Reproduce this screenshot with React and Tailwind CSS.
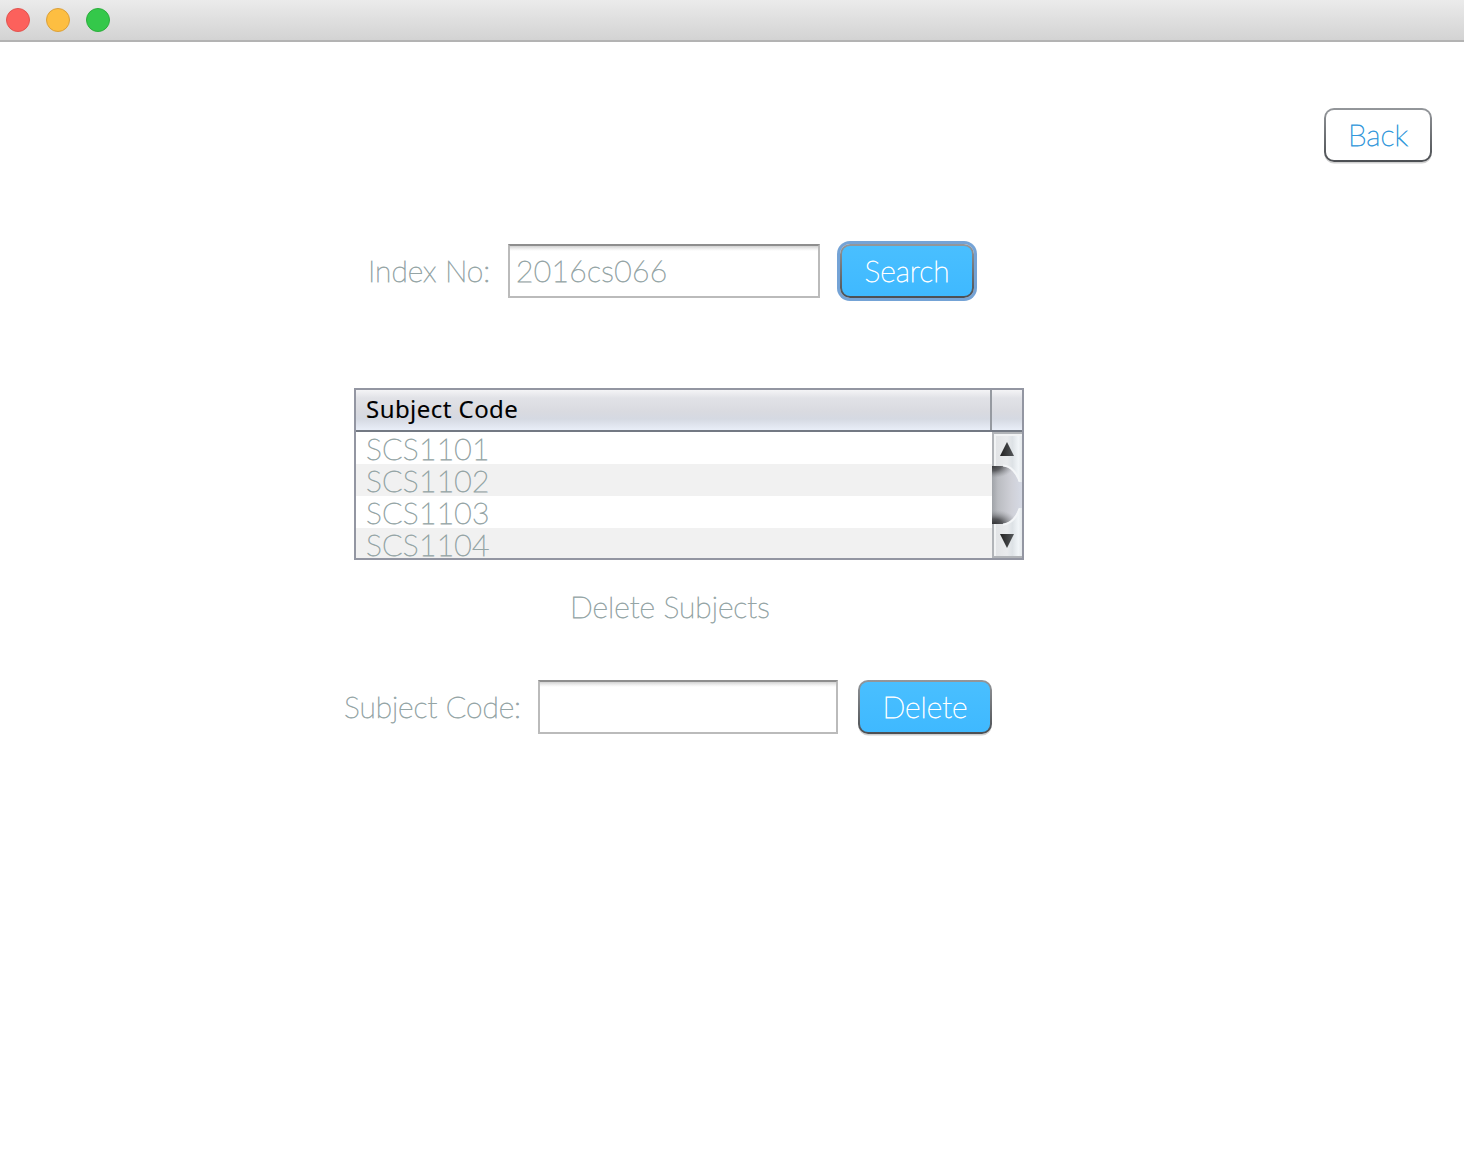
const codes = ['SCS1101', 'SCS1102', 'SCS1103', 'SCS1104'];

function TitleBar() {
  return (
    <header className="flex h-[42px] gap-4 border-b-2 border-[#b3b3b3] bg-linear-to-b from-[#ebebeb] to-[#d3d3d3] pl-[6px] pt-2">
      <span className="size-6 rounded-full border border-[#e2544f] bg-[#fc615c]" />
      <span className="size-6 rounded-full border border-[#dba03a] bg-[#fdbe41]" />
      <span className="size-6 rounded-full border border-[#2cae3c] bg-[#34c84a]" />
    </header>
  );
}

function Button({ children, className, fill, shadow = 'shadow-[0_2px_0_-0.5px_#d0d0d0]' }) {
  return (
    <button className={`flex h-[54px] shrink-0 rounded-[10px] bg-linear-to-b from-[#94979b] to-[#4c4f53] p-[2px] ${shadow} ${className}`}>
      <span className={`flex h-full w-full items-center justify-center rounded-[8px] pb-[2px] ${fill}`}>{children}</span>
    </button>
  );
}

const blue = 'bg-linear-to-b from-[#49bfff] to-[#3fb9ff] text-white';

function Field({ value, className }) {
  return (
    <div className={`flex h-[54px] shrink-0 items-center border-2 border-[#bbbbbb] border-t-[#8e8e8e] bg-linear-to-b from-[#d2d2d2] from-0% via-[#f1f1f1] via-[3px] to-white to-[5px] pb-[2px] pl-[6px] tracking-[0.35px] ${className}`}>
      {value}
    </div>
  );
}

function ScrollBar() {
  return (
    <svg className="h-[126px] w-[30px] shrink-0" viewBox="0 0 30 126">
      <defs>
        <linearGradient id="track">
          <stop offset="0" stopColor="#dfe2e5" />
          <stop offset=".22" stopColor="#e4e6e8" />
          <stop offset=".5" stopColor="#e9ebed" />
          <stop offset=".68" stopColor="#dde2e6" />
          <stop offset=".88" stopColor="#f1f5f8" />
          <stop offset="1" stopColor="#e5e9ec" />
        </linearGradient>
        <linearGradient id="thumb">
          <stop offset="0" stopColor="#a0a3a8" />
          <stop offset=".2" stopColor="#babcc1" />
          <stop offset=".65" stopColor="#cfd0d7" />
          <stop offset="1" stopColor="#d6dae5" />
        </linearGradient>
        <radialGradient id="shadeTop" gradientUnits="userSpaceOnUse" cx="0" cy="0" r="22" gradientTransform="translate(0 34) scale(1 .55)">
          <stop offset="0" stopColor="#38393b" />
          <stop offset=".4" stopColor="#4c4d50" stopOpacity=".85" />
          <stop offset="1" stopColor="#8c8e92" stopOpacity="0" />
        </radialGradient>
        <radialGradient id="shadeBottom" gradientUnits="userSpaceOnUse" cx="0" cy="0" r="24" gradientTransform="translate(2 92) scale(1 .6)">
          <stop offset="0" stopColor="#343537" />
          <stop offset=".35" stopColor="#4b4c4f" stopOpacity=".9" />
          <stop offset="1" stopColor="#9b9da1" stopOpacity="0" />
        </radialGradient>
        <linearGradient id="arrow">
          <stop offset="0" stopColor="#222" />
          <stop offset="1" stopColor="#55585b" />
        </linearGradient>
      </defs>
      <rect width="30" height="126" fill="url(#track)" />
      <path d="M0 1H30M1 0V126M0 125H30" fill="none" stroke="#b1b4b8" strokeWidth="2" />
      <path d="M2 3H30M3 2V124" fill="none" stroke="#f1f3f4" strokeWidth="2" />
      <path d="M0 34H10C17 34 24 41 27 50H30V76H27C24 85 17 92 10 92H0Z" fill="url(#thumb)" />
      <path d="M0 34H10C17 34 24 41 27 50H0Z" fill="url(#shadeTop)" />
      <path d="M0 76H27C24 85 17 92 10 92H0Z" fill="url(#shadeBottom)" />
      <path d="M11 33.5C19 34 25 41 27.5 49.5M27.5 76.5C25 85 19 92 11 92.5" fill="none" stroke="#f3f5f7" strokeWidth="2" />
      <path d="M15 10L22 24H8Z" fill="url(#arrow)" />
      <path d="M8 102H22L15 116Z" fill="url(#arrow)" />
    </svg>
  );
}

function SubjectTable() {
  const head = 'bg-[linear-gradient(#f4f4f6_0%,#e1e2e7_20%,#d9dae0_55%,#d5d9e2_72%,#e9eef8_100%)]';
  return (
    <section className="ml-[354px] mt-[90px] h-[172px] w-[670px] border-2 border-[#9396a2]">
      <div className={`flex h-[42px] border-b-2 border-[#737983] ${head}`}>
        <div className="w-[636px] border-r-2 border-[#969aa1] pl-[10px] font-['Noto_Sans'] text-[24px] font-normal leading-[37px] tracking-[0.45px] text-black [-webkit-text-stroke:0.1px_black]">
          Subject Code
        </div>
      </div>
      <div className="flex h-[126px] overflow-hidden">
        <ul className="w-[636px]">
          {codes.map((code) => (
            <li key={code} className="h-8 pl-[10px] leading-[33px] tracking-[0.25px] odd:bg-white even:bg-[#f1f1f1]">{code}</li>
          ))}
        </ul>
        <ScrollBar />
      </div>
    </section>
  );
}

export default function App() {
  return (
    <div className="h-[1156px] w-[1464px] overflow-hidden whitespace-nowrap bg-white font-['Lato',sans-serif] text-[30px] font-extralight text-[#95a5a6] [-webkit-text-stroke:0.8px_currentColor]">
      <TitleBar />
      <main>
        <div className="flex justify-end pr-8 pt-[66px]">
          <Button className="w-[108px] [-webkit-text-stroke-color:#3498db]" fill="bg-white text-[#3498db]">Back</Button>
        </div>
        <div className="mt-[82px] flex items-center pl-[368px]">
          <label className="w-[140px] pb-[2px]">Index No:</label>
          <Field value="2016cs066" className="w-[312px]" />
          <Button className="ml-5 w-[134px]" fill={blue} shadow="shadow-[0_0_0_3px_#74a3d6]">Search</Button>
        </div>
        <SubjectTable />
        <h2 className="ml-[570px] mt-[26px] h-11 leading-[41px]">Delete Subjects</h2>
        <div className="mt-[50px] flex items-center pl-[344px]">
          <label className="w-[194px] pb-[2px] tracking-[-0.05px]">Subject Code:</label>
          <Field value="" className="w-[300px]" />
          <Button className="ml-5 w-[134px]" fill={blue}>Delete</Button>
        </div>
      </main>
    </div>
  );
}
